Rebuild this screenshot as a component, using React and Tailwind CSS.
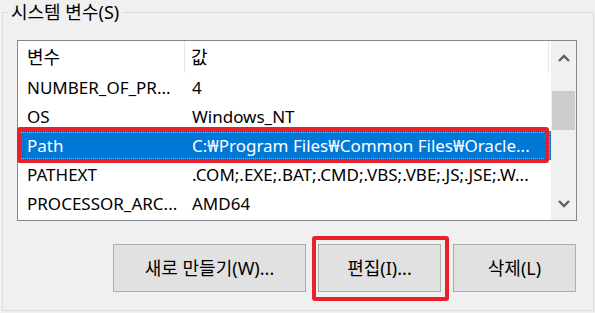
import React from "react";

const font = { fontFamily: '"Noto Sans", "Noto Sans CJK KR", sans-serif' };

const rows = [
  ["NUMBER_OF_PR...", "4"],
  ["OS", "Windows_NT"],
  ["Path", "C:₩Program Files₩Common Files₩Oracle..."],
  ["PATHEXT", ".COM;.EXE;.BAT;.CMD;.VBS;.VBE;.JS;.JSE;.W..."],
  ["PROCESSOR_ARC...", "AMD64"],
];

function Chevron({ up }) {
  return (
    <svg width="12" height="8" viewBox="0 0 12 8">
      <path
        d={up ? "M1 7 L6 2 L11 7" : "M1 1 L6 6 L11 1"}
        fill="none"
        stroke="#606060"
        strokeWidth="2.4"
      />
    </svg>
  );
}

export default function App() {
  return (
    <div
      className="relative w-[595px] h-[313px] bg-[#f0f0f0] overflow-hidden text-[18px] text-black"
      style={font}
    >
      <fieldset className="ml-[2px] w-[592px] h-[311px] border border-[#dcdcdc]">
        <legend className="ml-[5px] px-[3px] leading-[24px] text-[18px]">시스템 변수(S)</legend>
        <div className="ml-[14px] mt-[16px] w-[560px] h-[181px] border border-[#828790] bg-white flex">
          <div className="w-[533px] flex flex-col">
            <div className="h-[32px] flex items-center">
              <div className="w-[167px] h-full pl-[9px] flex items-center border-r border-[#e5e5e5]">변수</div>
              <div className="w-[364px] h-full pl-[6px] flex items-center border-r border-[#e5e5e5]">값</div>
            </div>
            {rows.map(([a, b]) => {
              const sel = a === "Path";
              return (
                <div
                  key={a}
                  className={
                    "h-[29px] flex items-center whitespace-nowrap text-[17px] " +
                    (sel ? "bg-[#0078d7] text-white outline-1 outline-dotted outline-[#7fb8ea] -outline-offset-2" : "")
                  }
                >
                  <div className="w-[167px] pl-[9px] overflow-hidden">{a}</div>
                  <div className="pl-[7px] overflow-hidden">{b}</div>
                </div>
              );
            })}
          </div>
          <div className="w-[25px] bg-[#f0f0f0] flex flex-col">
            <div className="h-[33px] flex items-center justify-center">
              <Chevron up />
            </div>
            <div className="h-[17px]" />
            <div className="h-[39px] mx-[1px] bg-[#cdcdcd]" />
            <div className="flex-1" />
            <div className="h-[33px] flex items-center justify-center">
              <Chevron />
            </div>
          </div>
        </div>
        <div className="ml-[110px] mt-[23px] flex gap-[12px]">
          <button className="w-[193px] h-[48px] border border-[#adadad] bg-[#e1e1e1] flex items-center justify-center">
            새로 만들기(W)...
          </button>
          <button className="w-[123px] h-[48px] border border-[#adadad] bg-[#e1e1e1] flex items-center justify-center">
            편집(I)...
          </button>
          <button className="w-[123px] h-[48px] border border-[#adadad] bg-[#e1e1e1] flex items-center justify-center">
            삭제(L)
          </button>
        </div>
      </fieldset>
      <div className="absolute left-[17px] top-[127px] w-[532px] h-[36px] border-[4px] border-[#e8202a] rounded-[3px]" />
      <div className="absolute left-[312px] top-[236px] w-[137px] h-[65px] border-[4px] border-[#e8202a] rounded-[3px]" />
    </div>
  );
}
